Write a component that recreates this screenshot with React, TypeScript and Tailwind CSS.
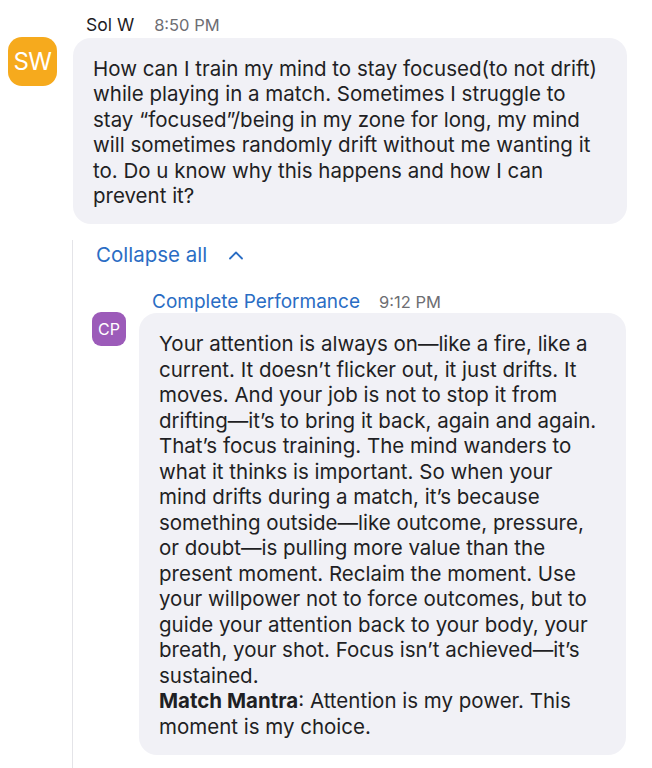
import React from "react";

const font = { fontFamily: "Inter, 'Noto Sans', sans-serif" };

function Chevron() {
  return (
    <svg width="16" height="10" viewBox="0 0 16 10" fill="none" className="ml-[21px]">
      <path d="M2 8.5 L8 2.5 L14 8.5" stroke="#2a6dc4" strokeWidth="1.8" strokeLinecap="round" strokeLinejoin="round" />
    </svg>
  );
}

export default function App() {
  return (
    <div className="w-[652px] h-[768px] bg-white overflow-hidden text-[#1f1f24]" style={font}>
      {/* Parent message */}
      <div className="flex pt-[12px]">
        <div className="w-[73px] shrink-0 pl-[8px] pt-[25px]">
          <div className="w-[49px] h-[49px] rounded-[14px] bg-[#f6aa1d] flex items-center justify-center text-white text-[24px] tracking-[-0.5px]">
            SW
          </div>
        </div>
        <div className="w-[554px]">
          <div className="flex items-baseline gap-[20px] pl-[13px] h-[25px]">
            <span className="text-[17.5px] text-[#1d1c1f]">Sol W</span>
            <span className="text-[16.5px] text-[#6e6e73]">8:50 PM</span>
          </div>
          <div className="mt-[1px] bg-[#f1f1f6] rounded-[18px] pl-[20px] pr-[8px] pt-[18px] pb-[16px] text-[20.5px] leading-[25.4px]">
            How can I train my mind to stay focused(to not drift)
            <br />
            while playing in a match. Sometimes I struggle to
            <br />
            stay “focused”/being in my zone for long, my mind
            <br />
            will sometimes randomly drift without me wanting it
            <br />
            to. Do u know why this happens and how I can
            <br />
            prevent it?
          </div>
        </div>
      </div>

      {/* Thread */}
      <div className="ml-[72px] mt-[16px] border-l-[1.5px] border-[#e4e4e8] h-[560px]">
        <div className="flex items-center pl-[23px] pt-[1px] h-[28px] text-[20.5px] text-[#2a6dc4]">
          Collapse all
          <Chevron />
        </div>
        <div className="flex mt-[20px]">
          <div className="w-[66px] shrink-0 pl-[19px] pt-[24px]">
            <div className="w-[34px] h-[34px] rounded-[9px] bg-[#9c5bb9] flex items-center justify-center text-white text-[16px]">
              CP
            </div>
          </div>
          <div className="w-[487px]">
            <div className="flex items-baseline gap-[19px] pl-[13px] h-[24px]">
              <span className="text-[19px] text-[#2a6dc4]">Complete Performance</span>
              <span className="text-[16.5px] text-[#6e6e73]">9:12 PM</span>
            </div>
            <div className="mt-[1px] bg-[#f1f1f6] rounded-[18px] pl-[20px] pr-[6px] pt-[18px] pb-[16px] text-[20.5px] leading-[25.5px]">
              Your attention is always on—like a fire, like a
              <br />
              current. It doesn’t flicker out, it just drifts. It
              <br />
              moves. And your job is not to stop it from
              <br />
              drifting—it’s to bring it back, again and again.
              <br />
              That’s focus training. The mind wanders to
              <br />
              what it thinks is important. So when your
              <br />
              mind drifts during a match, it’s because
              <br />
              something outside—like outcome, pressure,
              <br />
              or doubt—is pulling more value than the
              <br />
              present moment. Reclaim the moment. Use
              <br />
              your willpower not to force outcomes, but to
              <br />
              guide your attention back to your body, your
              <br />
              breath, your shot. Focus isn’t achieved—it’s
              <br />
              sustained.
              <br />
              <span className="font-bold">Match Mantra</span>: Attention is my power. This
              <br />
              moment is my choice.
            </div>
          </div>
        </div>
      </div>
    </div>
  );
}
